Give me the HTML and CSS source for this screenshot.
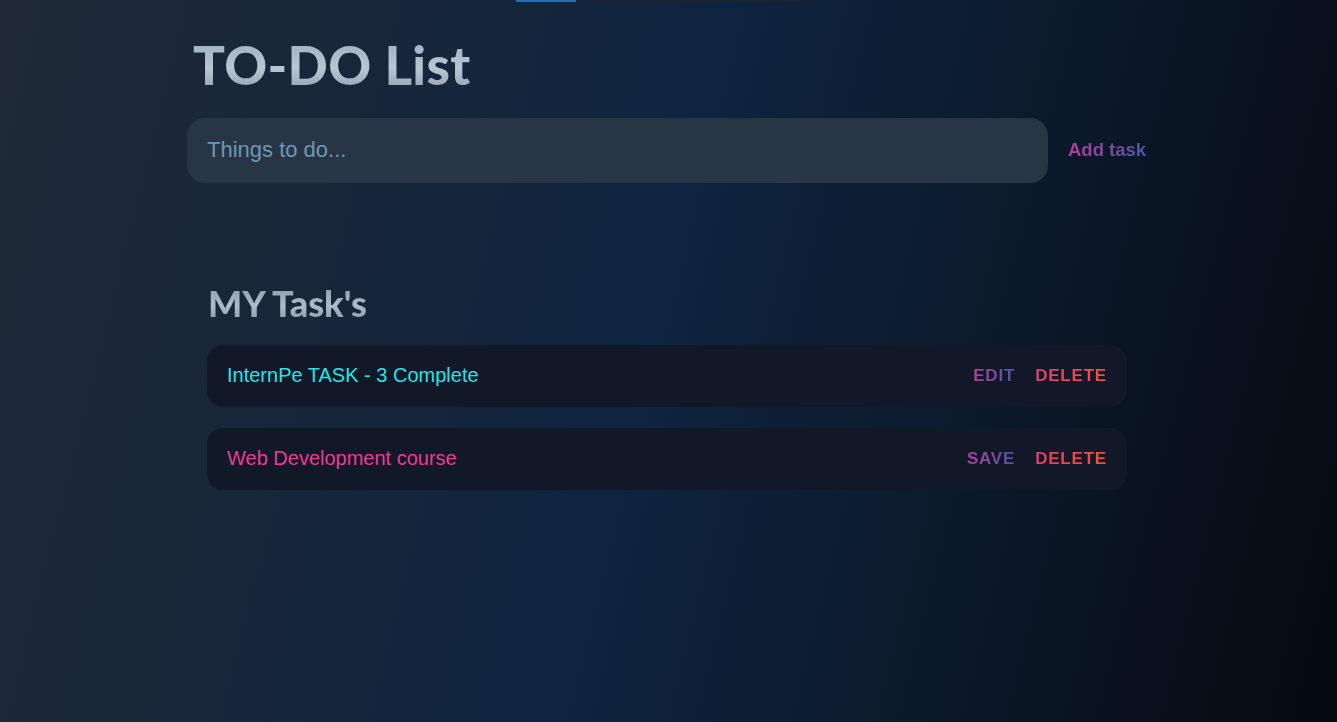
FILE: index.html
```html
<!DOCTYPE html>
<html lang="en">
<head>
<meta charset="utf-8">
<title>TO-DO List</title>
<link rel="stylesheet" href="styles.css">
</head>
<body>
<div class="topbar"><div class="topbar-fill"></div></div>
<main class="app">
  <h1 class="title">TO-DO List</h1>
  <form class="new-task" onsubmit="return false">
    <input class="new-task-input" type="text" placeholder="Things to do...">
    <button class="add-btn" type="submit"><span class="grad-purple">Add task</span></button>
  </form>
  <section class="tasks">
    <h2 class="tasks-title">MY Task's</h2>
    <div class="task-list">
      <div class="task">
        <span class="task-text cyan">InternPe TASK - 3 Complete</span>
        <div class="actions">
          <button class="act"><span class="grad-purple">EDIT</span></button>
          <button class="act"><span class="grad-red">DELETE</span></button>
        </div>
      </div>
      <div class="task">
        <span class="task-text pink">Web Development course</span>
        <div class="actions">
          <button class="act"><span class="grad-purple">SAVE</span></button>
          <button class="act"><span class="grad-red">DELETE</span></button>
        </div>
      </div>
    </div>
  </section>
</main>
</body>
</html>
```
FILE: styles.css
```css
html, body {
  margin: 0;
  padding: 0;
}
body {
  min-height: 100vh;
  background: linear-gradient(104deg, #1f2937 0%, #17263a 28%, #0f2440 48%, #0c1a2c 70%, #050a11 100%);
  font-family: "Liberation Sans", Arial, sans-serif;
  overflow: hidden;
}
.topbar {
  margin-left: 516px;
  width: 300px;
  height: 2px;
  background: #1a2331;
}
.topbar-fill {
  width: 60px;
  height: 2px;
  background: #1f6fc4;
}
.app {
  width: 960px;
  margin-left: 187px;
  display: flex;
  flex-direction: column;
}
.title {
  margin: 31px 0 0 6px;
  font-family: Lato, "Open Sans", sans-serif;
  font-weight: 900;
  font-size: 53px;
  line-height: 1.2;
  letter-spacing: 0.3px;
  background: linear-gradient(to bottom, #9fb0c2 10%, #b9c6d3 55%, #8c9db1 95%);
  -webkit-background-clip: text;
  background-clip: text;
  color: transparent;
  align-self: flex-start;
}
.new-task {
  margin-top: 21px;
  display: flex;
  align-items: center;
  gap: 20px;
}
.new-task-input {
  flex: 0 0 861px;
  height: 65px;
  box-sizing: border-box;
  border: none;
  outline: none;
  border-radius: 18px;
  background: #283545;
  padding: 0 20px;
  font-family: "Liberation Sans", Arial, sans-serif;
  font-size: 22px;
  color: #9fbfd6;
}
.new-task-input::placeholder {
  color: #6d97b6;
}
.add-btn {
  border: none;
  background: none;
  padding: 0;
  font-family: "Liberation Sans", Arial, sans-serif;
  font-size: 18.5px;
  font-weight: 700;
  cursor: pointer;
}
.grad-purple {
  background: linear-gradient(to right, #b43c9e, #4e55a6);
  -webkit-background-clip: text;
  background-clip: text;
  color: transparent;
}
.grad-red {
  background: linear-gradient(to right, #e0406e, #f05238);
  -webkit-background-clip: text;
  background-clip: text;
  color: transparent;
}
.tasks {
  margin-top: 99px;
  padding: 0 20px;
  display: flex;
  flex-direction: column;
}
.tasks-title {
  margin: 0 0 0 1px;
  font-family: Lato, "Open Sans", sans-serif;
  font-weight: 900;
  font-size: 36px;
  line-height: 1.2;
  background: linear-gradient(to bottom, #8c9cae 10%, #aebccb 55%, #8797aa 95%);
  -webkit-background-clip: text;
  background-clip: text;
  color: transparent;
  align-self: flex-start;
}
.task-list {
  margin-top: 20px;
  display: flex;
  flex-direction: column;
  gap: 21px;
}
.task {
  height: 62px;
  box-sizing: border-box;
  border-radius: 16px;
  background: #111827;
  display: flex;
  align-items: center;
  justify-content: space-between;
  padding: 0 20px;
}
.task-text {
  font-size: 20px;
}
.cyan { color: #27e3e6; }
.pink { color: #ea3c96; }
.actions {
  display: flex;
  gap: 20px;
}
.act {
  border: none;
  background: none;
  padding: 0;
  font-family: "Liberation Sans", Arial, sans-serif;
  font-size: 17px;
  font-weight: 700;
  letter-spacing: 0.8px;
  cursor: pointer;
}
```
